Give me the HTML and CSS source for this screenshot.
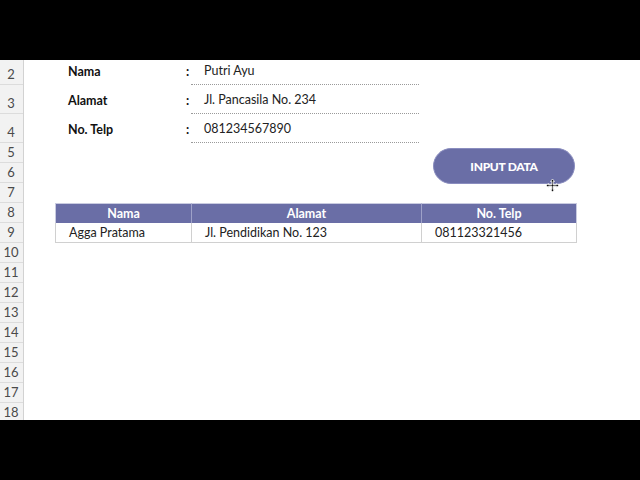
FILE: index.html
```html
<!DOCTYPE html>
<html>
<head>
<meta charset="utf-8">
<link rel="stylesheet" href="styles.css">
</head>
<body>
<div class="bar"></div>
<div class="sheet">
  <div class="heads">
    <div class="rh r25">2</div>
    <div class="rh r29">3</div>
    <div class="rh r29">4</div>
    <div class="rh">5</div>
    <div class="rh">6</div>
    <div class="rh">7</div>
    <div class="rh">8</div>
    <div class="rh">9</div>
    <div class="rh">10</div>
    <div class="rh">11</div>
    <div class="rh">12</div>
    <div class="rh">13</div>
    <div class="rh">14</div>
    <div class="rh">15</div>
    <div class="rh">16</div>
    <div class="rh">17</div>
    <div class="rh">18</div>
  </div>
  <div class="main">
    <div class="frow r25">
      <div class="lbl">Nama</div><div class="colon">:</div><div class="val">Putri Ayu</div>
    </div>
    <div class="frow r29">
      <div class="lbl">Alamat</div><div class="colon">:</div><div class="val">Jl. Pancasila No. 234</div>
    </div>
    <div class="frow r29">
      <div class="lbl">No. Telp</div><div class="colon">:</div><div class="val">081234567890</div>
    </div>
    <div class="spacer"></div>
    <div class="table">
      <div class="trow thead">
        <div class="c c1">Nama</div><div class="c c2">Alamat</div><div class="c c3">No. Telp</div>
      </div>
      <div class="trow tbody">
        <div class="c c1">Agga Pratama</div><div class="c c2">Jl. Pendidikan No. 123</div><div class="c c3">081123321456</div>
      </div>
    </div>
    <button class="btn">INPUT DATA</button>
    <svg class="cursor" width="15" height="15" viewBox="0 0 15 15">
      <path d="M7.5 1 L9.5 3.5 L8.2 3.5 L8.2 6.8 L11.5 6.8 L11.5 5.5 L14 7.5 L11.5 9.5 L11.5 8.2 L8.2 8.2 L8.2 11.5 L9.5 11.5 L7.5 14 L5.5 11.5 L6.8 11.5 L6.8 8.2 L3.5 8.2 L3.5 9.5 L1 7.5 L3.5 5.5 L3.5 6.8 L6.8 6.8 L6.8 3.5 L5.5 3.5 Z" fill="#111" stroke="#fff" stroke-width="0.8"/>
    </svg>
  </div>
</div>
<div class="bar"></div>
</body>
</html>
```
FILE: styles.css
```css
html, body {
  margin: 0;
  padding: 0;
  background: #000;
  width: 640px;
  height: 480px;
  overflow: hidden;
  font-family: Lato, "Liberation Sans", sans-serif;
}
.bar {
  height: 60px;
  background: #000;
}
.sheet {
  height: 360px;
  background: #fff;
  display: flex;
  overflow: hidden;
}
.heads {
  width: 23px;
  flex: none;
  background: #f2f2f2;
  border-right: 1px solid #d2d2d2;
}
.rh {
  height: 19px;
  border-bottom: 1px solid #dcdcdc;
  display: flex;
  align-items: flex-end;
  justify-content: center;
  font-size: 13px;
  color: #4a4a4a;
  line-height: 19px;
  padding-right: 1px;
}
.rh.r25 { height: 24px; }
.rh.r29 { height: 28px; }
.main {
  flex: 1;
  position: relative;
}
.frow {
  display: flex;
  align-items: flex-end;
  padding-left: 44px;
}
.frow.r25 { height: 25px; }
.frow.r29 { height: 29px; }
.lbl {
  width: 118px;
  font-weight: 700;
  font-size: 12.5px;
  color: #111;
  padding-bottom: 6px;
}
.colon {
  width: 18px;
  font-weight: 700;
  font-size: 12.5px;
  color: #111;
  padding-bottom: 6px;
}
.val {
  width: 215px;
  font-size: 12.5px;
  color: #222;
  padding: 0 0 6px 13px;
  margin-left: -13px;
  border-bottom: 1px dotted #9a9a9a;
}
.spacer { height: 60px; }
.table {
  margin-left: 31px;
  width: 522px;
}
.trow {
  display: flex;
  height: 20px;
}
.c {
  box-sizing: border-box;
  height: 20px;
  line-height: 19px;
  padding-top: 1px;
  font-size: 12.5px;
}
.c1 { width: 136px; }
.c2 { width: 230px; }
.c3 { width: 156px; }
.thead .c {
  background: #6a6ea6;
  color: #fff;
  font-weight: 700;
  text-align: center;
  border-left: 1px solid #9ea1c8;
  border-top: 1px solid #c9cbe0;
  padding-top: 0;
}
.thead .c1 { border-left: 1px solid #c9cbe0; }
.thead .c3 { border-right: 1px solid #c9cbe0; }
.tbody .c {
  color: #222;
  border-left: 1px solid #d0d0d0;
  border-bottom: 1px solid #d0d0d0;
  padding-left: 13px;
  padding-top: 1px;
  line-height: 18px;
}
.tbody .c3 { border-right: 1px solid #d0d0d0; }
.btn {
  position: absolute;
  left: 409px;
  top: 88px;
  width: 142px;
  height: 36px;
  border-radius: 18px;
  border: 1px solid #8a8dbf;
  background: #6a6ea6;
  color: #fff;
  font-family: Lato, "Liberation Sans", sans-serif;
  font-weight: 900;
  font-size: 12px;
  letter-spacing: -0.3px;
  padding: 0;
}
.cursor {
  position: absolute;
  left: 521px;
  top: 118px;
}
```
